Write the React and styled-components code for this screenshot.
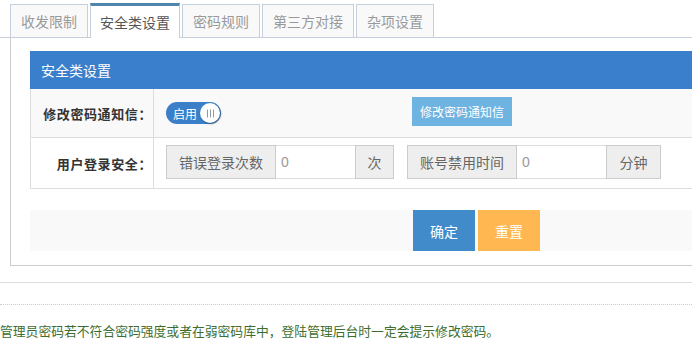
import styled, { createGlobalStyle } from "styled-components";

const Global = createGlobalStyle`
    html, body {
        margin: 0;
        padding: 0;
        overflow: hidden;
        background: #fff;
        font-family: "Liberation Sans", "Noto Sans CJK SC", sans-serif;
    }
`;

const Page = styled.div`
    width: 760px;
    padding-top: 3px;
`;

const Tabs = styled.div`
    display: flex;
    gap: 2px;
    padding-left: 10px;
    border-bottom: 1px solid #c5d0dc;
    height: 34px;
    align-items: flex-end;
`;

const Tab = styled.div`
    height: ${(p) => (p.$active ? "31px" : "32px")};
    padding: 0 ${(p) => (p.$active ? "9px" : "10px")};
    display: flex;
    align-items: center;
    font-size: 14px;
    color: ${(p) => (p.$active ? "#555" : "#999")};
    background: ${(p) => (p.$active ? "#fff" : "#f9f9f9")};
    border: 1px solid #c5d0dc;
    border-top: ${(p) => (p.$active ? "3px solid #4f84ad" : "1px solid #c5d0dc")};
    border-bottom: none;
    margin-bottom: ${(p) => (p.$active ? "-1px" : "0")};
    padding-bottom: ${(p) => (p.$active ? "1px" : "0")};
`;

const Panel = styled.div`
    margin-left: 10px;
    border: 1px solid #ccc;
    border-top: none;
    padding: 13px 0 14px 19px;
`;

const Header = styled.div`
    height: 38px;
    background: #3a7fcb;
    color: #fff;
    font-size: 14px;
    display: flex;
    align-items: center;
    padding-left: 11px;
`;

const Table = styled.div`
    border-left: 1px solid #ddd;
`;

const Row = styled.div`
    display: flex;
    height: ${(p) => p.$h}px;
    background: ${(p) => (p.$gray ? "#f9f9f9" : "#fff")};
    border-bottom: 1px solid #ddd;
`;

const Label = styled.div`
    width: 123px;
    border-right: 1px solid #ddd;
    display: flex;
    align-items: center;
    justify-content: flex-end;
    padding-right: 1px;
    box-sizing: border-box;
    font-size: 13px;
    letter-spacing: 0.6px;
    font-weight: bold;
    color: #333;
`;

const Value = styled.div`
    flex: 1;
    display: flex;
    align-items: center;
    padding-left: 12px;
`;

const Toggle = styled.div`
    width: 55px;
    height: 22px;
    border-radius: 11px;
    background: #3a7fc7;
    display: flex;
    align-items: center;
    box-sizing: border-box;
    padding: 0 1px 0 7px;
    justify-content: space-between;
    color: #fff;
    font-size: 12px;
`;

const Knob = styled.div`
    width: 20px;
    height: 20px;
    border-radius: 50%;
    background: #fff;
    box-shadow: 1px 1px 2px rgba(0, 0, 0, 0.35);
    display: flex;
    align-items: center;
    justify-content: center;
`;

const LightButton = styled.div`
    margin-left: 191px;
    width: 100px;
    height: 29px;
    background: #6fb3e0;
    color: #fff;
    font-size: 12px;
    display: flex;
    align-items: center;
    justify-content: center;
    margin-top: -4px;
`;

const Group = styled.div`
    display: flex;
    height: 34px;
    margin-right: 13px;
    margin-top: -2px;
`;

const Addon = styled.div`
    width: ${(p) => p.$w}px;
    background: #eee;
    border: 1px solid #ccc;
    box-sizing: border-box;
    display: flex;
    align-items: center;
    justify-content: center;
    font-size: 14px;
    color: #666;
`;

const Input = styled.div`
    width: ${(p) => p.$w}px;
    border-top: 1px solid #ddd;
    border-bottom: 1px solid #ddd;
    box-sizing: border-box;
    display: flex;
    align-items: center;
    padding-left: 5px;
    font-size: 14px;
    color: #999;
    background: #fff;
`;

const ButtonBar = styled.div`
    margin-top: 21px;
    height: 41px;
    background: #f9f9f9;
    display: flex;
    gap: 3px;
    padding-left: 383px;
`;

const Button = styled.div`
    width: 62px;
    height: 41px;
    background: ${(p) => p.$bg};
    color: #fff;
    font-size: 14px;
    display: flex;
    align-items: center;
    justify-content: center;
`;

const Rule = styled.div`
    margin-top: 16px;
    border-top: 1px solid #ddd;
`;

const Dotted = styled.div`
    margin-top: 21px;
    border-top: 1px dotted #ccc;
`;

const Note = styled.div`
    margin-top: 16px;
    font-size: 12.8px;
    color: #3d6e2f;
`;

const Grip = () => (
    <svg width="9" height="9" viewBox="0 0 9 9">
        <path d="M1.5 0.5v8M4.5 0.5v8M7.5 0.5v8" stroke="#8c9aa8" strokeWidth="1" />
    </svg>
);

const App = () => {
    return (
        <Page>
            <Global />
            <Tabs>
                <Tab>收发限制</Tab>
                <Tab $active>安全类设置</Tab>
                <Tab>密码规则</Tab>
                <Tab>第三方对接</Tab>
                <Tab>杂项设置</Tab>
            </Tabs>
            <Panel>
                <Header>安全类设置</Header>
                <Table>
                    <Row $h={48} $gray>
                        <Label>修改密码通知信：</Label>
                        <Value>
                            <Toggle>
                                启用
                                <Knob>
                                    <Grip />
                                </Knob>
                            </Toggle>
                            <LightButton>修改密码通知信</LightButton>
                        </Value>
                    </Row>
                    <Row $h={50}>
                        <Label>用户登录安全：</Label>
                        <Value>
                            <Group>
                                <Addon $w={110}>错误登录次数</Addon>
                                <Input $w={79}>0</Input>
                                <Addon $w={39}>次</Addon>
                            </Group>
                            <Group>
                                <Addon $w={110}>账号禁用时间</Addon>
                                <Input $w={89}>0</Input>
                                <Addon $w={55}>分钟</Addon>
                            </Group>
                        </Value>
                    </Row>
                </Table>
                <ButtonBar>
                    <Button $bg="#428bca">确定</Button>
                    <Button $bg="#ffb752">重置</Button>
                </ButtonBar>
            </Panel>
            <Rule />
            <Dotted />
            <Note>管理员密码若不符合密码强度或者在弱密码库中，登陆管理后台时一定会提示修改密码。</Note>
        </Page>
    );
};

export default App;
